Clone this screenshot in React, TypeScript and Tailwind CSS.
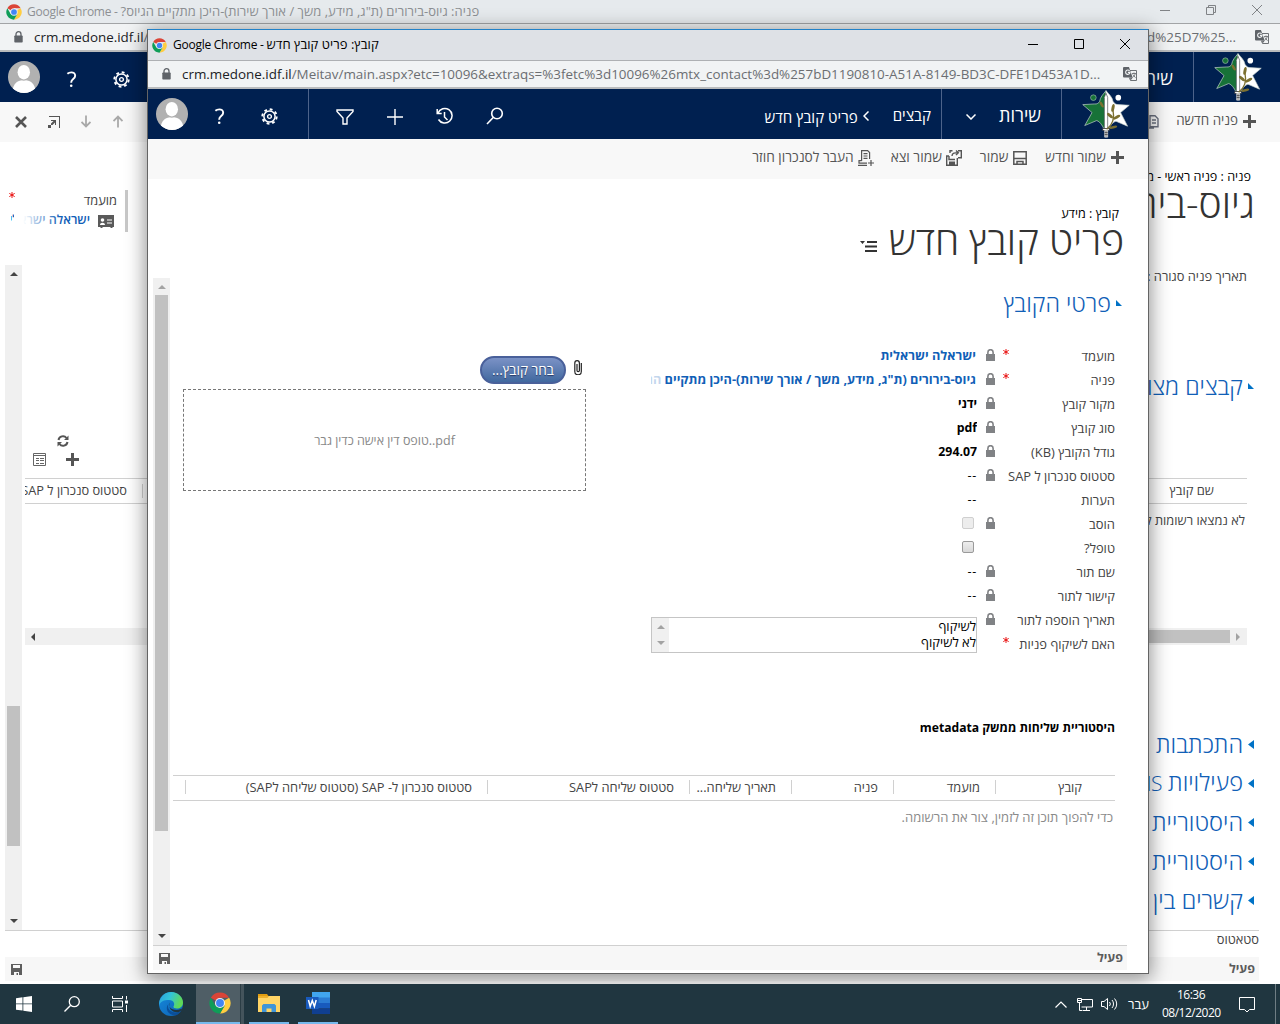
import React from "react";

type Kids = { children?: React.ReactNode; className?: string };

/* One line of right-to-left text */
const He = ({ children, className = "" }: Kids) => (
  <span dir="rtl" className={"block shrink-0 whitespace-nowrap " + className}>{children}</span>
);

const ChromeLogo = ({ className = "" }: Kids) => (
  <svg viewBox="0 0 48 48" className={"shrink-0 " + className}>
    <path d="M24 24 L4 12.5 A23 23 0 0 1 44 12.5 L24 12.5 Z" fill="#db4437" />
    <path d="M24 24 L44 12.5 A23 23 0 0 1 24 47 L34 30 Z" fill="#ffcd40" />
    <path d="M24 24 L34 30 L24 47 A23 23 0 0 1 4 12.5 L14 30 Z" fill="#0f9d58" />
    <circle cx="24" cy="24" r="11" fill="#f1f1f1" />
    <circle cx="24" cy="24" r="8.6" fill="#4285f4" />
  </svg>
);

const UrlLock = ({ className = "" }: Kids) => (
  <svg viewBox="0 0 9 12" className={"h-[12px] w-[9px] shrink-0 " + className}>
    <path d="M2 5V3.2a2.5 2.5 0 0 1 5 0V5" fill="none" stroke="#5f6368" strokeWidth="1.3" />
    <rect x="0.3" y="4.5" width="8.4" height="7" rx="0.8" fill="#5f6368" />
  </svg>
);

const Translate = () => (
  <svg viewBox="0 0 14 14" className="size-[14px] shrink-0">
    <path d="M6 3.5h7.5v10H7.5L6.3 10.5" fill="#f1f3f4" stroke="#6e7276" strokeWidth="1" />
    <path d="M0 1a1 1 0 0 1 1-1h5l3.6 10.4H1a1 1 0 0 1-1-1z" fill="#5f6368" />
    <path d="M6.6 3.9A2.2 2.2 0 1 0 7 5.4H4.9" fill="none" stroke="#f1f3f4" strokeWidth="1.1" />
    <path d="M9 6.5h4M11 5.5v1M12.2 6.7c-.3 1.600-1.400 2.800-2.600 3.600M9.800 7.500l2.700 3.200" fill="none" stroke="#6e7276" strokeWidth=".9" />
    <path d="M7 10.5h2.800L7.600 13.500z" fill="#5f6368" />
  </svg>
);

const Avatar = () => (
  <svg viewBox="0 0 32 32" className="size-[32px] shrink-0">
    <defs>
      <clipPath id="av"><circle cx="16" cy="16" r="16" /></clipPath>
    </defs>
    <g clipPath="url(#av)">
      <rect width="32" height="32" fill="#b1b1b1" />
      <path d="M4.500 32C4.500 22 10 19 16 19s11.500 3 11.500 13z" fill="#fff" />
      <ellipse cx="15.800" cy="11.500" rx="7.300" ry="8.300" fill="#b1b1b1" />
      <ellipse cx="15.800" cy="11.200" rx="6.200" ry="7.200" fill="#fff" />
    </g>
  </svg>
);

const Help = () => (
  <svg viewBox="0 0 12 18" className="h-[17px] w-[11px] shrink-0" fill="none" stroke="#fff" strokeWidth="2.100">
    <path d="M1.500 2.800C3 1.500 4.500 1.200 5.800 1.200c2.500 0 4.200 1.300 4.200 3.600C10 8.500 5.700 8.300 5.700 12v.6" />
    <circle cx="5.700" cy="15.800" r="1.400" fill="#fff" stroke="none" />
  </svg>
);

const Gear = () => (
  <svg viewBox="-8.500 -8.500 17 17" className="size-[17px] shrink-0" fill="none" stroke="#fff">
    <circle r="7.200" strokeWidth="1.900" strokeDasharray="2.830 2.825" />
    <circle r="5.600" strokeWidth="1.500" />
    <circle r="1.900" strokeWidth="1.400" />
  </svg>
);

const Emblem = () => (
  <svg viewBox="0 0 144 146" className="h-[48.500px] w-[48px] shrink-0">
    <path d="M72 2 C64 12 54 22 53 34 C50 40 44 43 38 42 L2 44 L30 68 L8 107 L44 92 C56 96 62 110 72 128 Z" fill="#177238" stroke="#c9d3cf" strokeWidth="2" />
    <path d="M72 2 C80 12 92 22 93 34 C96 40 102 44 108 44 L142 46 L116 68 L137 109 L102 94 C90 98 84 110 72 128 Z" fill="#fff" stroke="#c9d3cf" strokeWidth="2" />
    <circle cx="34" cy="23" r="8.500" fill="#177238" stroke="#c9d3cf" strokeWidth="1.500" />
    <circle cx="109" cy="23" r="8.500" fill="#fff" />
    <path d="M67 116V22l5-12 5 12v94z" fill="#fff" stroke="#4b4f55" strokeWidth="2" />
    <path d="M62 116h20v6H62z" fill="#fff" stroke="#222" strokeWidth="2" />
    <path d="M68 122h9v20h-9z" fill="#a9a9a9" stroke="#e8e8e8" strokeWidth="2" />
    <path d="M68 128h9M68 134h9" stroke="#333" strokeWidth="2" />
    <g fill="#7c7030">
      <ellipse cx="59" cy="44" rx="4" ry="10" transform="rotate(-30 59 44)" />
      <ellipse cx="93" cy="54" rx="4.500" ry="12" transform="rotate(12 93 54)" />
      <ellipse cx="84" cy="77" rx="4.500" ry="11" transform="rotate(-50 84 77)" />
      <ellipse cx="104" cy="82" rx="4.500" ry="12" transform="rotate(62 104 82)" />
      <ellipse cx="94" cy="112" rx="4" ry="12" transform="rotate(75 94 112)" />
    </g>
    <path d="M93 60C98 84 94 104 74 118" fill="none" stroke="#7c7030" strokeWidth="4" />
  </svg>
);

const Plus = ({ className = "" }: Kids) => (
  <svg viewBox="0 0 13 13" className={"size-[13px] shrink-0 " + className}>
    <path d="M5 0h3v5h5v3H8v5H5V8H0V5h5z" fill="currentColor" />
  </svg>
);

const FieldLock = () => (
  <svg viewBox="0 0 9 12" className="h-[12px] w-[9px] shrink-0">
    <path d="M1.900 6V3.300a2.600 2.600 0 0 1 5.200 0V6" fill="none" stroke="#808285" strokeWidth="1.600" />
    <rect y="5" width="9" height="7" fill="#808285" />
  </svg>
);

const SmallSave = () => (
  <svg viewBox="0 0 11 11" className="size-[11px] shrink-0">
    <path d="M0 0h11v11H0z" fill="#5e5e5e" />
    <path d="M2 1h7v3H2zM3 8h5v3H3z" fill="#f8f8f8" />
    <path d="M5.500 9H7v2H5.500z" fill="#5e5e5e" />
  </svg>
);

const Star = ({ className = "" }: Kids) => (
  <svg viewBox="0 0 6 6" className={"size-[6px] shrink-0 " + className} stroke="#e80000" strokeWidth="0.900">
    <path d="M3 0v6M0.300 1.400l5.400 3.200M0.300 4.600l5.400-3.200" />
  </svg>
);

const ArrowUp = ({ className = "" }: Kids) => (
  <svg viewBox="0 0 8 4" className={"h-[4px] w-[8px] shrink-0 " + className}><path d="M4 0l4 4H0z" fill="currentColor" /></svg>
);
const ArrowDown = ({ className = "" }: Kids) => (
  <svg viewBox="0 0 8 4" className={"h-[4px] w-[8px] shrink-0 " + className}><path d="M4 4L0 0h8z" fill="currentColor" /></svg>
);

const NavTools = () => (
  <>
    <Avatar />
    <div className="flex w-[37px] justify-end pt-[4px]"><Help /></div>
    <div className="ml-[36px] pt-[4px]"><Gear /></div>
  </>
);

/* ---------- background browser window ---------- */

const closedSections: React.ReactNode[] = [
  "התכתבות",
  <>פעילויות <span className="text-[21px] tracking-[-0.500px]">SMS</span></>,
  "היסטוריית",
  "היסטוריית",
  "קשרים בין",
];

function BackWindow() {
  return (
    <div className="flex h-[984px] flex-col bg-white">
      <div className="flex h-[24px] shrink-0 items-center border-b border-[#a2a4a6] bg-[#e6eaed] pl-[6px] text-[12px] text-[#8d9093]">
        <ChromeLogo className="size-[16px]" />
        <He className="ml-[5px] tracking-[-0.25px]"><span className="text-[13px] tracking-[0.020px]">פניה: גיוס-בירורים (ת"ג, מידע, משך / אורך שירות)-היכן מתקיים הגיוס?</span> - Google Chrome</He>
        <svg viewBox="0 0 104 12" className="ml-auto mr-[17px] h-[12px] w-[104px] -translate-y-[2px]" fill="none" stroke="#808386">
          <path d="M1 6.500h10M47.500 3.500h7v7h-7zM49.500 3.500v-2h7v7h-2M93 1l10 10M103 1L93 11" />
        </svg>
      </div>
      <div className="flex h-[28px] shrink-0 items-center border-b-2 border-[#b9bbbd] bg-[#f1f3f4] px-[14px] text-[13.400px] text-[#202124]">
        <UrlLock />
        <span className="ml-[11px]">crm.medone.idf.il<span className="text-[#6b6e72]">/</span></span>
        <span className="ml-auto mr-[19px] text-[#6b6e72]">d%25D7%25...</span>
        <div className="mr-[-3px]"><Translate /></div>
      </div>
      <div className="flex h-[50px] shrink-0 items-center bg-[#002050] pl-[8px]">
        <NavTools />
        <He className="ml-auto mr-[20px] pt-[2px] text-[18px] font-medium text-white">שירות</He>
        <div className="flex h-full w-[87px] items-center justify-center border-l border-[#4d638a] pl-[2px]"><Emblem /></div>
      </div>
      <div className="flex h-[40px] shrink-0 items-center bg-[#f8f8f8] pb-px pl-[15px] pr-[24px] text-[#555]">
        <svg viewBox="0 0 12 12" className="size-[12px]" stroke="#555" strokeWidth="2.600"><path d="M1 1l10 10M11 1L1 11" /></svg>
        <svg viewBox="0 0 12 12" className="ml-[21px] size-[12px]" fill="#555"><path d="M1 0h11v12h-1V1H1zM3 4h5v5H7V6.500L4.500 9H3V7.500L5.500 5H3zM0 9h3v3H0z" /></svg>
        <svg viewBox="0 0 10 12" className="ml-[21px] h-[13px] w-[10px]" fill="none" stroke="#a9a9a9" strokeWidth="1.800"><path d="M5 0v11M.5 6.500L5 11l4.500-4.500" /></svg>
        <svg viewBox="0 0 10 12" className="ml-[22px] h-[13px] w-[10px]" fill="none" stroke="#a9a9a9" strokeWidth="1.800"><path d="M5 12V1M.5 5.500L5 1l4.500 4.500" /></svg>
        <svg viewBox="0 0 14 14" className="ml-auto mr-[17px] size-[14px]" fill="none" stroke="#6b7180" strokeWidth="1.400"><path d="M5 .7h5l3 3v8H5zM7 5h4M7 8h4M1 5v8h8" /></svg>
        <He className="mr-[5px] -mt-[2px] text-[13.400px]">פניה חדשה</He>
        <Plus />
      </div>

      <div className="flex min-h-0 flex-1 pl-[5px]">
        <div className="flex w-[20px] shrink-0 flex-col pt-[123px]">
          <div className="flex h-[665px] w-[17px] flex-col items-center bg-[#f0f0f0] pb-[7px] pt-[7px] text-[#444]">
            <ArrowUp />
            <div className="mt-[430px] h-[140px] w-[13px] shrink-0 bg-[#c1c1c1]" />
            <ArrowDown className="mt-auto" />
          </div>
        </div>
        <div className="-ml-[20px] flex w-[143px] shrink-0 flex-col pt-[48px]">
          <div className="ml-[3px] h-[42px] w-[120px] border-r-[3px] border-[#c8c8c8]">
            <div className="flex h-[21px] justify-between pl-px pr-[8px]">
              <Star className="mt-[2px]" />
              <He className="text-[12.850px] leading-[20px] text-[#444]">מועמד</He>
            </div>
            <div className="flex h-[18px] items-center justify-end gap-[8px] pr-[11px]">
              <div className="relative">
                <He className="w-[79px] overflow-hidden text-[12.500px] font-semibold leading-[18px] text-[#1160b7]">ישראלה ישראלית</He>
                <div className="absolute inset-y-0 left-[3px] w-[46px] bg-linear-to-r from-white from-20% to-white/0" />
              </div>
              <svg viewBox="0 0 16 13" className="mt-[3px] h-[13px] w-[16px]"><path d="M0 0h16v12h-1.500v1h-2v-1h-8v1h-2v-1H0z" fill="#5a5a5a" /><path d="M2 10c0-3 5-3 5 0zM9 4.500h5v1H9zM9 7.500h5v1H9z" fill="#fff" /><circle cx="4.500" cy="5" r="1.800" fill="#fff" /></svg>
            </div>
          </div>
          <div className="ml-[20px] mt-[203px] flex flex-col">
            <svg viewBox="0 0 12 12" className="ml-[32px] size-[12px]" fill="none" stroke="#555" strokeWidth="2"><path d="M1.500 5A4.500 4.500 0 0 1 9.500 3M10.500 7A4.500 4.500 0 0 1 2.500 9" /><path d="M11.500 .5v4.500H7zM.5 11.500V7H5z" fill="#555" stroke="none" /></svg>
            <div className="mt-[6px] flex items-center pl-[8px] text-[#555]">
              <svg viewBox="0 0 13 13" className="size-[13px]" fill="none" stroke="#666"><path d="M.5 .5h12v12H.5zM.5 2.500h12M3 5.500h3M7 5.500h4M3 7.500h3M7 7.500h4M3 10.500h3M7 10.500h4" /></svg>
              <Plus className="ml-[20px]" />
            </div>
            <div className="mt-[12px] flex h-[26px] w-[123px] items-center overflow-hidden border-y border-[#d0d0d0]">
              <div className="flex h-[14px] w-[118px] justify-end border-r border-[#d0d0d0] pr-[15px]">
                <He className="text-[12.800px] leading-[12px] text-[#444]">סטטוס סנכרון ל SAP</He>
              </div>
            </div>
            <div className="mt-[124px] flex h-[17px] items-center bg-[#f0f0f0] pl-[4px] text-[#444]">
              <ArrowUp className="-rotate-90" />
            </div>
          </div>
        </div>
        <div className="ml-auto flex w-[140px] shrink-0 flex-col items-end overflow-hidden pr-[21px] pt-[26px]">
          <He className="mr-[8px] text-[12.600px] leading-[18px] text-black">פניה : פניה ראשי - מידע</He>
          <He className="mr-[4px] -mt-[3px] mb-[3px] text-[39px] font-light leading-[40px] text-[#333]">גיוס-בירורים</He>
          <He className="mr-[12px] mt-[40px] text-[12.850px] leading-[20px] text-[#444]">תאריך פניה סגורה :</He>
          <div className="mr-[5px] mt-[85px] flex items-center gap-[5px] text-[#1160b7]">
            <He className="text-[23.400px] font-light leading-[30px]">קבצים מצורפים</He>
            <svg viewBox="0 0 6 6" className="size-[6px]"><path d="M0 0v6h6z" fill="#0072c6" /></svg>
          </div>
          <div className="mr-[12px] mt-[77px] h-[26px] w-[110px] border-y border-[#d0d0d0] pr-[33px]">
            <He className="text-[12.900px] leading-[22px] text-[#444]">שם קובץ</He>
          </div>
          <He className="mr-[14px] mt-[6px] text-[12.850px] leading-[20px] text-[#444]">לא נמצאו רשומות קבצים</He>
          <div className="mr-[12px] mt-[98px] flex h-[17px] w-[130px] items-center bg-[#f0f0f0] text-[#a3a3a3]">
            <div className="h-[13px] w-[113px] bg-[#c1c1c1]" />
            <ArrowUp className="ml-[4px] rotate-90" />
          </div>
          <div className="mr-[5px] mt-[80px] flex flex-col items-end">
            {closedSections.map((s, i) => (
              <div key={i} className="flex h-[39px] items-center gap-[5px] text-[#1160b7]">
                <He className="-mt-px mb-px text-[23.600px] font-light leading-[30px]">{s}</He>
                <svg viewBox="0 0 6 9" className="h-[9px] w-[6px]"><path d="M6 0v9L0 4.500z" fill="#0072c6" /></svg>
              </div>
            ))}
          </div>
        </div>
      </div>
      <div className="ml-[5px] flex h-[54px] w-[1254px] shrink-0 flex-col border-t border-[#d0d0d0]">
        <He className="h-[26px] text-[12.850px] leading-[17px] text-[#444]">סטאטוס</He>
        <div className="flex h-[24px] items-center justify-between bg-[#f7f7f7] pl-[6px] pr-[4px]">
          <SmallSave />
          <He className="text-[12.500px] font-bold text-[#5b5b5b]">פעיל</He>
        </div>
      </div>
    </div>
  );
}

/* ---------- popup window ---------- */

type Row = { label: string; value?: string; link?: boolean; lock?: boolean; req?: boolean; box?: "off" | "on"; fade?: boolean };

const rows: Row[] = [
  { label: "מועמד", value: "ישראלה ישראלית", link: true, lock: true, req: true },
  { label: "פניה", value: 'גיוס-בירורים (ת"ג, מידע, משך / אורך שירות)-היכן מתקיים הגיוס?', link: true, lock: true, req: true, fade: true },
  { label: "מקור קובץ", value: "ידני", lock: true },
  { label: "סוג קובץ", value: "pdf", lock: true },
  { label: "גודל הקובץ (KB)", value: "294.07", lock: true },
  { label: "סטטוס סנכרון ל SAP", value: "--", lock: true },
  { label: "הערות", value: "--" },
  { label: "הוסב", box: "off", lock: true },
  { label: "טופל?", box: "on" },
  { label: "שם תור", value: "--", lock: true },
  { label: "קישור לתור", value: "--", lock: true },
  { label: "תאריך הוספה לתור", lock: true },
  { label: "האם לשיקוף פניות", req: true },
];

function valueClass(r: Row) {
  if (r.link) return "pr-[1px] text-[12.750px] font-bold leading-[22px] text-[#1160b7]";
  if (r.value === "--") return "text-[12.500px] font-medium leading-[24px] tracking-[0.700px] text-black";
  return "text-[12.300px] font-bold leading-[24px] text-black";
}

function FieldRow({ r }: { r: Row }) {
  return (
    <div dir="rtl" className="flex h-[24px]">
      <div className="relative w-[112px] shrink-0">
        <He className="text-[12.950px] leading-[24px] text-[#444]">{r.label}</He>
        {r.req && <Star className="absolute left-0 top-[5px]" />}
      </div>
      <div className="flex w-[26px] shrink-0 pr-[8px] pt-[5px]">{r.lock ? <FieldLock /> : null}</div>
      <div className="relative w-[326px] overflow-hidden">
        {r.value && <He className={valueClass(r)}>{r.value}</He>}
        {r.fade && <div className="absolute inset-y-0 left-0 w-[12px] bg-white/75" />}
        {r.box && (
          <div className={r.box === "on"
            ? "mr-[3px] mt-[5px] size-[12px] rounded-[2px] border border-[#9a9a9a] bg-linear-to-b from-[#eee] to-[#d8d8d8]"
            : "mr-[3px] mt-[5px] size-[12px] rounded-[2px] border border-[#cfcfcf] bg-[#ededed]"} />
        )}
      </div>
    </div>
  );
}

const columns = [
  { t: "קובץ", c: "w-[120px] pr-[33px]" },
  { t: "מועמד", c: "w-[102px] pr-[15px]" },
  { t: "פניה", c: "w-[102px] pr-[15px]" },
  { t: "תאריך שליחה...", c: "w-[102px] pr-[15px]" },
  { t: "סטטוס שליחה לSAP", c: "w-[202px] pr-[15px]" },
  { t: "סטטוס סנכרון ל- SAP (סטטוס שליחה לSAP)", c: "w-[302px] pr-[15px]" },
];

function Popup() {
  return (
    <div className="absolute left-[147px] top-[29px] flex h-[945px] w-[1002px] flex-col border border-[#646464] border-t-[#2181c8] bg-white shadow-[0_3px_18px_2px_rgba(0,0,0,0.42)]">
      <div className="flex h-[31px] shrink-0 items-center border-b border-[#aeb0b3] bg-[#dee1e6] pl-[4px] text-[12px] text-black">
        <ChromeLogo className="size-[15px]" />
        <He className="ml-[6px] tracking-[-0.25px]"><span className="text-[13px] tracking-[0.050px]">קובץ: פריט קובץ חדש</span> - Google Chrome</He>
        <svg viewBox="0 0 104 12" className="ml-auto mr-[17px] h-[12px] w-[104px] -translate-y-px" fill="none" stroke="#000">
          <path d="M1 6.500h10M47.500 1.500h9v9h-9zM93 1l10 10M103 1L93 11" />
        </svg>
      </div>
      <div className="flex h-[28px] shrink-0 items-center border-b-2 border-[#b9bbbd] bg-[#f1f3f4] pl-[14px] pr-[11px] text-[13.420px] text-[#202124]">
        <UrlLock />
        <span className="ml-[11px] whitespace-nowrap">crm.medone.idf.il<span className="text-[#6b6e72]">/Meitav/main.aspx?etc=10096&amp;extraqs=%3fetc%3d10096%26mtx_contact%3d%257bD1190810-A51A-8149-BD3C-DFE1D453A1D...</span></span>
        <div className="ml-auto"><Translate /></div>
      </div>

      <div className="flex h-[50px] shrink-0 items-center bg-[#002050] pl-[8px] text-white">
        <NavTools />
        <div className="ml-[30px] flex h-full items-center border-l border-[#4d638a] pl-[27px]">
          <svg viewBox="0 0 18 16" className="mt-[6px] h-[16px] w-[18px]" fill="none" stroke="#fff" strokeWidth="1.400"><path d="M1 1h16v1.500L11 9v6H7V9L1 2.500z" /></svg>
          <svg viewBox="0 0 16 16" className="ml-[33px] mt-[5px] size-[16px]" stroke="#fff" strokeWidth="1.400"><path d="M8 0v16M0 8h16" /></svg>
          <svg viewBox="0 0 18 18" className="ml-[33px] mt-[3px] size-[18px]" fill="none" stroke="#fff" strokeWidth="1.500"><path d="M2 6A7.300 7.300 0 1 1 2.500 12.500M1.200 2v4.500h4.500M8.500 5v5l3 3" /></svg>
          <svg viewBox="0 0 18 18" className="ml-[32px] mt-[3px] size-[18px]" fill="none" stroke="#fff" strokeWidth="1.600"><circle cx="11" cy="6.500" r="5.300" /><path d="M7.200 10.500L1 17" /></svg>
        </div>
        <He className="ml-auto pt-[5px] text-[15.100px] leading-[20px]">פריט קובץ חדש</He>
        <svg viewBox="0 0 6 10" className="ml-[5px] mt-[4px] h-[10px] w-[6px]" fill="none" stroke="#fff" strokeWidth="1.500"><path d="M5.500 .5L1 5l4.500 4.500" /></svg>
        <He className="ml-[24px] mr-[10px] pt-[2px] text-[15.100px] leading-[20px]">קבצים</He>
        <div className="flex h-full w-[120px] items-center justify-between border-l border-[#4d638a] pl-[24px] pr-[20px]">
          <svg viewBox="0 0 10 6" className="mt-[5px] h-[6px] w-[10px]" fill="none" stroke="#fff" strokeWidth="1.500"><path d="M.5 .5L5 5 9.500 .5" /></svg>
          <He className="pt-[2px] text-[18px] font-medium">שירות</He>
        </div>
        <div className="flex h-full w-[87px] items-center justify-center border-l border-[#4d638a] pl-[2px]"><Emblem /></div>
      </div>

      <div className="flex h-[40px] shrink-0 items-center justify-end bg-[#f8f8f8] pb-[3px] pr-[24px] text-[13.700px] text-[#555]">
        <He>העבר לסנכרון חוזר</He>
        <svg viewBox="0 0 16 16" className="ml-[4px] size-[16px]" fill="none" stroke="#555" strokeWidth="1.200"><path d="M3.600 11V.6h6l2 2V9M5.500 3.600h4M5.500 6h4M5.500 8.400h4M3.600 10.600H1v2.600h8M0 15.300h9M13 10v6M10 13h6" /></svg>
        <He className="ml-[17px]">שמור וצא</He>
        <svg viewBox="0 0 16 16" className="ml-[4px] size-[16px]" fill="none" stroke="#555" strokeWidth="1.400"><path d="M3 6H.7v9.300h10.600V8M3 6v3.500h6M4 3V.7h2.500M12 .7h3.300v7H12M6 6c0-3 3-3.500 6-3M10 .5l2.300 2.200L10 5" /><path d="M3 11.500h6v3.500H3z" fill="#555" stroke="none" /></svg>
        <He className="ml-[18px]">שמור</He>
        <svg viewBox="0 0 14 14" className="ml-[5px] size-[14px]" fill="none" stroke="#555" strokeWidth="1.500"><path d="M.8 .8h12.400v12.400H.8zM.8 7.500h12.400M4 13V10.500h6V13" /></svg>
        <He className="ml-[18px]">שמור וחדש</He>
        <Plus className="ml-[5px]" />
      </div>

      <div className="flex h-[99px] shrink-0 flex-col items-end pt-[26px]">
        <He className="mr-[29px] text-[12.600px] leading-[18px] text-black">קובץ : מידע</He>
        <div className="-mt-[3px] mr-[24px] flex items-center gap-[12px]">
          <svg viewBox="0 0 17 13" className="mt-[12px] h-[13px] w-[17px]" fill="#333"><path d="M0 1h5L2.500 4zM7 1h10v2H7zM5 5.500h12v2H5zM5 10h12v2H5z" /></svg>
          <He className="text-[39px] font-light leading-[40px] text-[#333]">פריט קובץ חדש</He>
        </div>
      </div>

      <div className="ml-[5px] flex h-[667px] w-[974px] shrink-0">
        <div className="flex w-[17px] shrink-0 flex-col items-center bg-[#f0f0f0] pb-[7px] pt-[7px] text-[#444]">
          <ArrowUp className="text-[#a3a3a3]" />
          <div className="mt-[6px] h-[536px] w-[13px] shrink-0 bg-[#c1c1c1]" />
          <ArrowDown className="mt-auto" />
        </div>
        <div className="flex flex-1 flex-col pl-[3px] pr-[12px]">
          <div className="-mr-[7px] flex h-[66px] items-start justify-end gap-[5px] pt-[9px] text-[#1160b7]">
            <He className="text-[23.400px] font-light leading-[32px]">פרטי הקובץ</He>
            <svg viewBox="0 0 6 6" className="mt-[13px] size-[6px]"><path d="M0 0v6h6z" fill="#0072c6" /></svg>
          </div>
          <div className="flex h-[366px] justify-between pl-[10px]">
            <div className="flex w-[403px] flex-col pt-[12px]">
              <div className="flex items-start justify-end gap-[8px] pr-[4px]">
                <button dir="rtl" className="h-[28px] w-[86px] whitespace-nowrap rounded-full border-2 border-[#49609a] bg-linear-to-b from-[#7b92c6] to-[#41699f] text-[13.600px] leading-[24px] text-white [text-shadow:0_1px_1px_#283966]">בחר קובץ...</button>
                <svg viewBox="0 0 8 15" className="mt-[4px] h-[15px] w-[8px]" fill="none" stroke="#222" strokeWidth="1.200"><path d="M7.300 3v8.500a3.200 3.200 0 0 1-6.500 0V3a2.200 2.200 0 0 1 4.600 0v7.500a1.200 1.200 0 0 1-2.400 0V4" /></svg>
              </div>
              <div className="mt-[5px] flex h-[102px] items-center justify-center border border-dashed border-[#777] pt-[3px] text-[12.500px] text-[#888]">
                <span className="whitespace-nowrap">טופס דין אישה כדין גבר..pdf</span>
              </div>
            </div>
            <div className="w-[464px]">
              {rows.map((r, i) => <FieldRow key={i} r={r} />)}
              <div className="-mt-[39px] flex h-[36px] w-[326px] border border-[#c5c5c5] bg-white">
                <div className="flex w-[17px] flex-col items-center justify-between bg-[#f0f0f0] py-[7px] text-[#a3a3a3]">
                  <ArrowUp /><ArrowDown />
                </div>
                <div className="flex-1 text-[13px] leading-[16px] text-black">
                  <He>לשיקוף</He>
                  <He>לא לשיקוף</He>
                </div>
              </div>
            </div>
          </div>
          <He className="mt-[8px] text-[12.150px] font-bold leading-[20px] text-black">היסטוריית שליחות ממשק metadata</He>
          <div dir="rtl" className="mt-[37px] flex h-[26px] shrink-0 border-y border-[#d0d0d0] pt-[4px]">
            {columns.map((c) => (
              <div key={c.t} className={"h-[14px] shrink-0 border-l border-[#d0d0d0] " + c.c}>
                <He className="text-[12.850px] leading-[14px] text-[#444]">{c.t}</He>
              </div>
            ))}
          </div>
          <He className="mr-[2px] mt-[6px] text-[13px] leading-[20px] text-[#8a8a8a]">כדי להפוך תוכן זה לזמין, צור את הרשומה.</He>
        </div>
      </div>
      <div className="ml-[5px] flex h-[25px] w-[974px] shrink-0 items-center justify-between border-t border-[#d0d0d0] bg-[#f7f7f7] pl-[6px] pr-[4px]">
        <SmallSave />
        <He className="text-[12.500px] font-bold text-[#5b5b5b]">פעיל</He>
      </div>
    </div>
  );
}

/* ---------- taskbar ---------- */

function Taskbar() {
  return (
    <div className="flex h-[40px] items-center bg-[#203640] text-white">
      <div className="flex w-[48px] justify-center">
        <svg viewBox="0 0 16 16" className="size-[16px]" fill="#fff"><path d="M0 2.200l6.500-.9v6.200H0zM7.300 1.200L16 0v7.500H7.300zM0 8.300h6.500v6.300L0 13.700zM7.300 8.300H16V16l-8.700-1.200z" /></svg>
      </div>
      <div className="flex w-[48px] justify-center">
        <svg viewBox="0 0 16 16" className="size-[16px]" fill="none" stroke="#fff" strokeWidth="1.300"><circle cx="10.300" cy="5.700" r="5" /><path d="M6.700 9.300L.5 15.500" /></svg>
      </div>
      <div className="flex w-[48px] justify-center">
        <svg viewBox="0 0 16 16" className="size-[16px]" fill="none" stroke="#fff"><path d="M.5 0v2.500h10V0M.5 5h10v6H.5zM.5 16v-2.500h10V16M14.500 0v3.500M14.500 9v7" /><path d="M13 4.500h3v3h-3z" fill="#fff" stroke="none" /></svg>
      </div>
      <div className="flex w-[52px] justify-center pl-[2px]">
        <svg viewBox="0 0 24 24" className="size-[24px]">
          <defs>
            <linearGradient id="e1" x1="0" y1="0" x2="1" y2=".3"><stop offset="0" stopColor="#2a9fdd" /><stop offset=".5" stopColor="#33c4d8" /><stop offset="1" stopColor="#5fd957" /></linearGradient>
            <linearGradient id="e2" x1="0" y1="0" x2="1" y2="1"><stop offset="0" stopColor="#1689dc" /><stop offset="1" stopColor="#0c62b4" /></linearGradient>
          </defs>
          <circle cx="12" cy="12" r="12" fill="url(#e2)" />
          <path d="M.3 10C1.500 4 6.500 0 12 0c7.500 0 12 5.500 12 10.500 0 4-3 6-6 6-2.500 0-4-1-3.500-2 1.500-2 .8-6.500-4.500-6.500C5 8 1 9 .3 14z" fill="url(#e1)" />
          <path d="M9.500 12c-2 5 2.500 9 8 8.500 1.800-.2 3.500-1 4.800-2-1 2-3 4-5 4.700C10 24 5 17 9.500 12z" fill="#0b4f99" />
          <path d="M11 10.500c-2.300 3.200.5 7.500 6.500 7.500 3 0 5-1.200 5.800-1.500-.5 2-3 3.800-5.300 3.800-5.500 0-9-4.500-7-9.800z" fill="#203640" />
        </svg>
      </div>
      <div className="flex h-full w-[44px] items-center justify-center border-b-2 border-[#76b9ed] bg-[#4f5e66] pl-[4px]"><ChromeLogo className="size-[22px]" /></div>
      <div className="h-full w-[4px] border-l border-[#2b3d45] bg-[#44545c]" />
      <div className="ml-[5px] flex h-full w-[40px] items-center justify-center border-b-2 border-[#76b9ed]">
        <svg viewBox="0 0 22 18" className="h-[18px] w-[22px]"><path d="M0 0h9l1.500 2H0z" fill="#e09d11" /><path d="M0 2h22v16H0z" fill="#ffd566" /><path d="M0 2h11l-1.500 2H0z" fill="#eeb12c" /><path d="M4 18v-6.500l1.500-1.500h11L18 11.500V18h-4.500v-3.500h-5V18z" fill="#3f95d9" /></svg>
      </div>
      <div className="ml-[9px] flex h-full w-[40px] items-center justify-center border-b-2 border-[#76b9ed]">
        <svg viewBox="0 0 24 22" className="h-[22px] w-[24px]"><path d="M6 0h18v6H6z" fill="#41a5ee" /><path d="M6 5.500h18v5.500H6z" fill="#2b7cd3" /><path d="M6 11h18v5.500H6z" fill="#185abd" /><path d="M6 16.500h18V22H6z" fill="#103f91" /><path d="M0 5h12.500v12H0z" fill="#185abd" /><path d="M2.500 8l1.700 6.500L6.300 8.500l2.100 6L10.200 8" fill="none" stroke="#fff" strokeWidth="1.500" /></svg>
      </div>
      <div className="ml-auto flex h-full items-center text-[12px]">
        <svg viewBox="0 0 12 7" className="h-[7px] w-[12px]" fill="none" stroke="#fff" strokeWidth="1.200"><path d="M.5 6.500L6 1l5.500 5.500" /></svg>
        <svg viewBox="0 0 16 14" className="ml-[10px] h-[14px] w-[16px]" fill="none" stroke="#fff"><path d="M5 2.500h10.500v7.500H4.500M6 13.500h7M9.500 10v3.500M.5 1.500h4v4h-4zM2.500 5.500v8h3M1 3.500h3" /></svg>
        <svg viewBox="0 0 17 14" className="ml-[8px] h-[14px] w-[17px]" fill="none" stroke="#fff"><path d="M.5 4.500H3L6.500 1.500v11L3 9.500H.5zM8.500 5a3 3 0 0 1 0 4M11 3a6 6 0 0 1 0 8M13.500 1.500a8 8 0 0 1 0 11" /></svg>
        <He className="ml-[10px] w-[21px] text-[13px] leading-[16px]">עבר</He>
        <div className="ml-[13px] w-[58px] text-center leading-[18px] tracking-[-0.500px]">
          <div className="whitespace-nowrap">16:36</div>
          <div className="whitespace-nowrap">08/12/2020</div>
        </div>
        <svg viewBox="0 0 16 16" className="ml-[19px] mt-px size-[16px]" fill="none" stroke="#fff"><path d="M.5 .5h15v12h-5L8 15l-2.500-2.500h-5z" /></svg>
        <div className="ml-[20px] h-full w-[5px] border-l border-[#6f7d84]" />
      </div>
    </div>
  );
}

export default function App() {
  return (
    <div className="relative h-[1024px] w-[1280px] overflow-hidden bg-white font-['Open_Sans','Noto_Sans',sans-serif]">
      <BackWindow />
      <Popup />
      <div className="relative"><Taskbar /></div>
    </div>
  );
}
